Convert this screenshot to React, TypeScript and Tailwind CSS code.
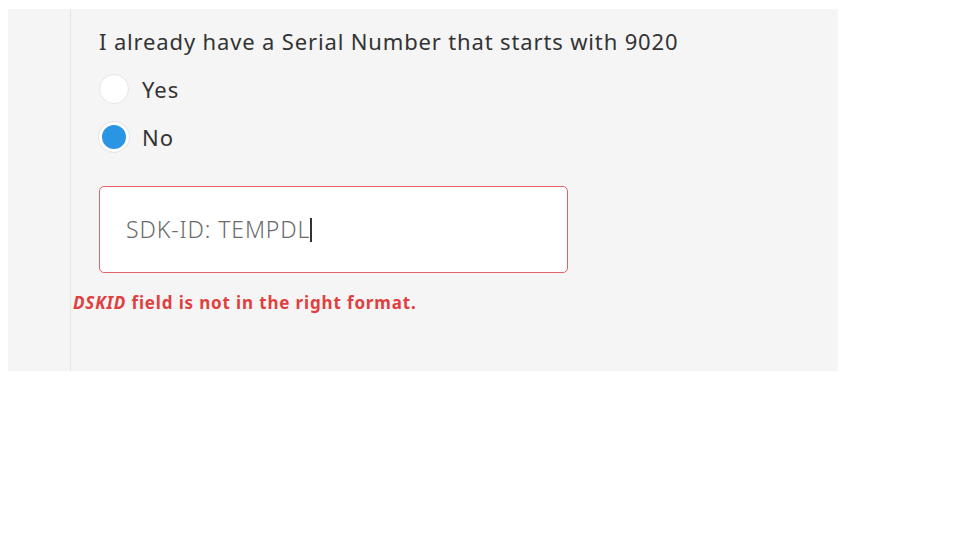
import React from "react";

export default function App() {
  const font = { fontFamily: '"Noto Sans", "Open Sans", sans-serif' };
  return (
    <div className="w-[960px] h-[540px] bg-white pt-[9px] pl-[8px]" style={font}>
      <div className="w-[830px] h-[362px] bg-[#f5f5f5] flex">
        <div className="w-[63px] border-r border-[#e4e4e4]" />
        <div className="flex flex-col pl-[28px]">
          <div className="mt-[18px] text-[22px] leading-[28px] text-[#333] tracking-[0.85px]">
            I already have a Serial Number that starts with 9020
          </div>
          <div className="mt-[19px] flex flex-col gap-[18px]">
            <label className="flex items-center gap-[13px] h-[30px]">
              <span className="w-[30px] h-[30px] rounded-full bg-white border border-[#e6e6e6]" />
              <span className="text-[22px] text-[#333] leading-[28px] tracking-[1px]">Yes</span>
            </label>
            <label className="flex items-center gap-[13px] h-[30px]">
              <span className="w-[30px] h-[30px] rounded-full bg-[#2a96e3] border-[3px] border-white shadow-[0_0_0_1px_#e6e6e6]" />
              <span className="text-[22px] text-[#333] leading-[28px] tracking-[1px]">No</span>
            </label>
          </div>
          <div className="mt-[34px] w-[469px] h-[87px] bg-white border border-[#e46464] rounded-[5px] flex items-center pl-[26px]">
            <span className="text-[23px] text-[#6b6b6b] font-light tracking-[0.9px]">SDK-ID: TEMPDL</span>
            <span className="w-[1.5px] h-[24px] bg-[#333]" />
          </div>
          <div className="mt-[19px] -ml-[26px] text-[17px] font-bold text-[#e0403f] leading-[22px] tracking-[0.85px]">
            <i>DSKID</i> field is not in the right format.
          </div>
        </div>
      </div>
    </div>
  );
}
